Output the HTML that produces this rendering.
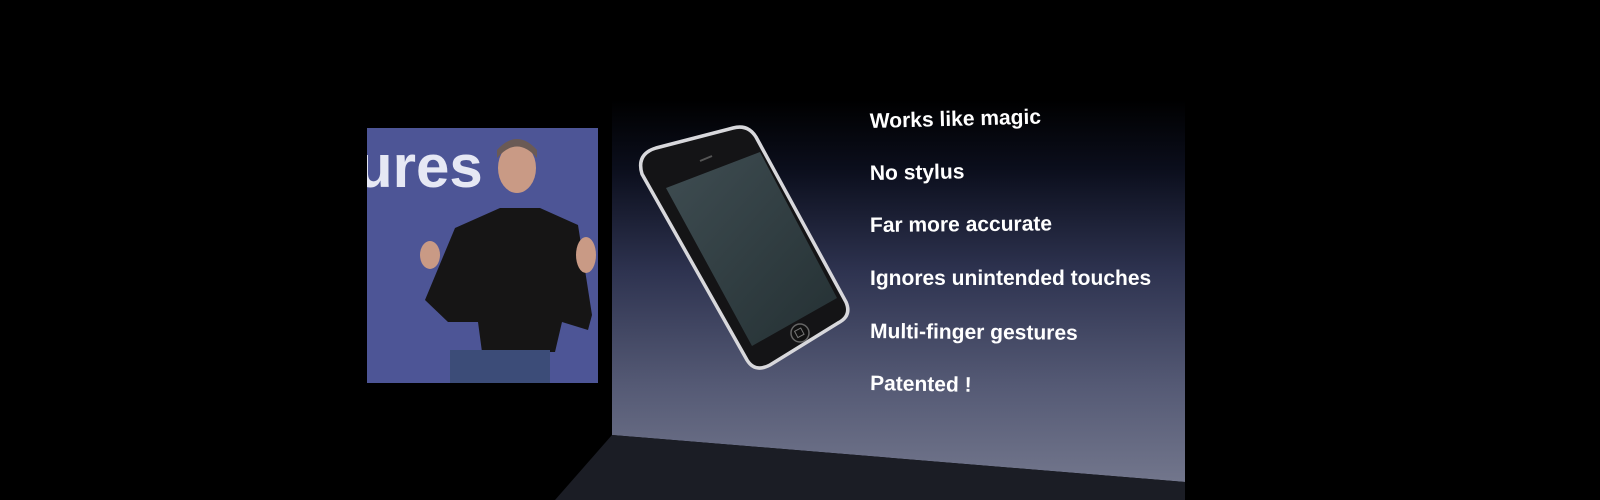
<!DOCTYPE html>
<html><head><meta charset="utf-8"><style>
html,body{margin:0;padding:0;background:#000;width:1600px;height:500px;overflow:hidden}
svg{display:block}
text{font-family:"Liberation Sans",sans-serif;fill:#fff;font-weight:bold}
</style></head><body>
<svg width="1600" height="500" viewBox="0 0 1600 500">
<defs>
<linearGradient id="sl" x1="0" y1="0" x2="0" y2="1">
<stop offset="0" stop-color="#000"/>
<stop offset="0.18" stop-color="#0b0e1c"/>
<stop offset="0.45" stop-color="#2e3350"/>
<stop offset="0.75" stop-color="#555a75"/>
<stop offset="1" stop-color="#72768c"/>
</linearGradient>
<linearGradient id="scr" x1="0" y1="0" x2="1" y2="1">
<stop offset="0" stop-color="#3f4d52"/>
<stop offset="1" stop-color="#243033"/>
</linearGradient>
<clipPath id="ic"><rect x="367" y="128" width="231" height="255"/></clipPath>
</defs>
<rect width="1600" height="500" fill="#000"/>
<polygon points="612,100 1185,100 1185,482 612,435" fill="url(#sl)"/>
<polygon points="612,435 1185,482 1185,500 555,500" fill="#1b1d25"/>
<g clip-path="url(#ic)">
<rect x="367" y="128" width="231" height="255" fill="#4d5596"/>
<text x="356" y="187" font-size="60" style="fill:#e6e8f4">ures</text>
<ellipse cx="517" cy="168" rx="19" ry="25" fill="#c99a85"/>
<path d="M497 158 Q517 135 537 158 L537 150 Q517 128 497 150Z" fill="#6a5a55"/>
<path d="M500 208 L540 208 L578 225 L592 315 L588 330 L562 322 L555 352 L482 352 L478 322 L448 322 L425 300 L455 228Z" fill="#161515"/>
<rect x="450" y="350" width="100" height="35" fill="#3c4c78"/>
<ellipse cx="430" cy="255" rx="10" ry="14" fill="#c99a85"/>
<ellipse cx="586" cy="255" rx="10" ry="18" fill="#c99a85"/>
</g>
<path d="M656 148 L733 128 Q748 124 756 137 L846 302 Q852 316 838 323 L770 365 Q755 373 747 360 L642 174 Q636 154 656 148Z" fill="#141416" stroke="#d8d8dc" stroke-width="3.5"/>
<path d="M666 188 L760 152 L837 298 L752 346Z" fill="url(#scr)"/>
<line x1="700" y1="161" x2="712" y2="156" stroke="#555" stroke-width="2"/>
<circle cx="800" cy="333" r="9" fill="#111" stroke="#666" stroke-width="1.5"/>
<rect x="796" y="329" width="7" height="7" fill="none" stroke="#777" stroke-width="1" transform="rotate(-28 800 333)"/>
<g font-size="21">
<text x="870" y="128" transform="rotate(-1.5 870 128)">Works like magic</text>
<text x="870" y="180" transform="rotate(-1 870 180)">No stylus</text>
<text x="870" y="232" transform="rotate(-0.5 870 232)">Far more accurate</text>
<text x="870" y="285">Ignores unintended touches</text>
<text x="870" y="338" transform="rotate(0.5 870 338)">Multi-finger gestures</text>
<text x="870" y="390" transform="rotate(1 870 390)">Patented !</text>
</g>
</svg>
</body></html>
